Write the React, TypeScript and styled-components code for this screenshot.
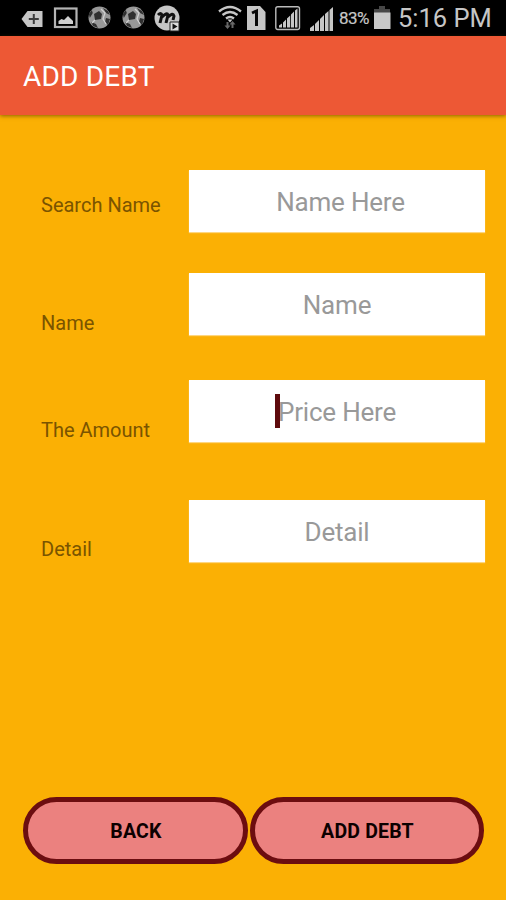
import React from "react";
import styled, { createGlobalStyle } from "styled-components";

const GlobalStyle = createGlobalStyle`
  * { box-sizing: border-box; }
  body { margin: 0; background: #fbb004; font-family: Roboto, sans-serif; }
`;

const Screen = styled.div`
  display: flex;
  flex-direction: column;
  height: 900px;
  width: 506px;
  overflow: hidden;
  background: #fbb004;
`;

const StatusBar = styled.header`
  display: flex;
  flex: none;
  height: 36px;
  background: #000;
  color: #c6c6c6;
`;

const Notifications = styled.div`
  display: flex;
  flex: none;
  width: 218px;
  padding-left: 21px;
`;

const SystemIcons = styled.div`
  display: flex;
  flex: none;
  width: 121px;
`;

const Glyph = styled.svg<{ $gap?: number }>`
  display: block;
  flex: none;
  height: 36px;
  margin-right: ${(p) => p.$gap ?? 0}px;
`;

const Percent = styled.span`
  flex: none;
  width: 35px;
  font-size: 17px;
  line-height: 37px;
  letter-spacing: -0.5px;
  -webkit-text-stroke: 0.2px #c6c6c6;
`;

const Clock = styled.time`
  flex: none;
  margin-left: 7px;
  font-size: 25.5px;
  line-height: 36px;
  white-space: nowrap;
`;

const AppBar = styled.div`
  display: flex;
  align-items: center;
  flex: none;
  position: relative;
  height: 79px;
  padding: 2px 0 0 23px;
  background: #ed5835;
  box-shadow: 0 1px 4px rgba(70, 50, 0, 0.6);
`;

const Title = styled.h1`
  margin: 0;
  color: #fff;
  font-size: 28px;
  font-weight: 400;
  line-height: 32px;
  letter-spacing: 0.2px;
`;

const Form = styled.form`
  display: flex;
  flex-direction: column;
  flex: 1;
  padding: 55px 21px 36px 23px;
`;

const Row = styled.div<{ $gap: number }>`
  display: grid;
  grid-template-columns: 148px 296px;
  flex: none;
  height: 63px;
  margin-bottom: ${(p) => p.$gap}px;
  padding-left: 18px;
`;

const Label = styled.label<{ $drop: number }>`
  padding-top: ${(p) => p.$drop}px;
  color: #7a5400;
  font-size: 20px;
  line-height: 24px;
  white-space: nowrap;
`;

const Field = styled.div`
  position: relative;
  height: 62px;
`;

const Input = styled.input<{ $indent?: number }>`
  display: block;
  width: 100%;
  height: 62px;
  padding: 2px 0 0 ${(p) => p.$indent ?? 0}px;
  border: 0;
  border-radius: 0;
  outline: 0;
  background: #fff;
  box-shadow: 0 1px 1px rgba(255, 225, 160, 0.8);
  color: #333;
  font: 400 26px Roboto, sans-serif;
  letter-spacing: -0.2px;
  text-align: center;
  &::placeholder { color: #999; opacity: 1; }
`;

const Caret = styled.span`
  position: absolute;
  top: 14px;
  left: 86px;
  width: 5px;
  height: 34px;
  background: #5e0a0d;
`;

const Actions = styled.div`
  display: grid;
  grid-template-columns: 225px 234px;
  gap: 2px;
  margin-top: auto;
`;

const PillButton = styled.button`
  height: 67px;
  padding: 1px 0 0 1px;
  border: 5px solid #6c0d10;
  border-radius: 34px;
  background: #eb817f;
  color: #0c0000;
  font: 700 19.5px Roboto, sans-serif;
  letter-spacing: 0.2px;
`;

const Ball = ({ gap }: { gap: number }) => (
  <Glyph width="23" viewBox="0 0 23 36" $gap={gap}>
    <circle cx="11.5" cy="17.5" r="11" fill="#989898" />
    <path d="M6 14l5-3 3 3-1 5-6 1zM0.8 14l3-4 1 3-3 5zM15 8l5 3 2 4-4-2zM18 18l4 1-2 6-3-3zM3 22l5 2 2 4-5-2z" fill="#303030" />
    <path d="M13 9l4 4-2 6 3 5M7 20l-3 3" stroke="#d0d0d0" strokeWidth="1.3" fill="none" />
  </Glyph>
);

const fields = [
  { id: "search", label: "Search Name", hint: "Name Here", drop: 23, gap: 40, indent: 7 },
  { id: "name", label: "Name", hint: "Name", drop: 38, gap: 44 },
  { id: "amount", label: "The Amount", hint: "Price Here", drop: 38, gap: 57, active: true },
  { id: "detail", label: "Detail", hint: "Detail", drop: 37, gap: 0 },
];

export default function App() {
  return (
    <Screen>
      <GlobalStyle />
      <StatusBar>
        <Notifications>
          <Glyph width="22" viewBox="0 0 22 36" $gap={10}>
            <path d="M0.5 19l6-8H21.5v16H6.5z" fill="#c6c6c6" />
            <path d="M12.8 14v10M7.8 19h10" stroke="#3c3c3c" strokeWidth="2" />
          </Glyph>
          <Glyph width="25" viewBox="0 0 25 36" $gap={10}>
            <rect x="2" y="8.5" width="21.5" height="18.5" fill="none" stroke="#b4b4b4" strokeWidth="2.2" />
            <path d="M5.5 24v-3l3-2 2.5 1 4-4 3 3 2 2v3z" fill="#d0d0d0" />
          </Glyph>
          <Ball gap={11} />
          <Ball gap={9} />
          <Glyph width="27" viewBox="0 0 27 36">
            <circle cx="13" cy="18" r="12.5" fill="#c6c6c6" />
            <path d="M4 15q3-3 4 0l-2 8m2-6q5-5 6-2l-2 8m2-6q5-5 6-1l-1 4" stroke="#111" strokeWidth="3" fill="none" />
            <path d="M16 22h9v9h-9z" fill="#ddd" stroke="#222" />
            <path d="M18.5 23.5l5 3-5 3z" fill="#111" />
          </Glyph>
        </Notifications>
        <SystemIcons>
          <Glyph width="24" viewBox="0 0 24 36" $gap={5}>
            <path d="M1 11.5q11-9 22 0M4.5 15q7.5-6 15 0M8 18.5q4-3 8 0" stroke="#c6c6c6" strokeWidth="2.3" fill="none" />
            <path d="M9.5 19.5h5l-2.5 3z" fill="#c6c6c6" />
            <path d="M9.5 22v5M14.5 23v5" stroke="#686868" strokeWidth="2" />
            <path d="M6.5 25.5h6l-3 3.5zM11.5 24.5h6l-3-3.5z" fill="#686868" />
          </Glyph>
          <Glyph width="19" viewBox="0 0 19 36" $gap={9}>
            <path d="M0 6h13l5.5 6v18H0z" fill="#c6c6c6" />
            <path d="M5 13l4.5-2v15" stroke="#080808" strokeWidth="3" fill="none" />
          </Glyph>
          <Glyph width="26" viewBox="0 0 26 36" $gap={8}>
            <rect x="0.8" y="6.8" width="23.7" height="22.7" rx="2" fill="none" stroke="#bbb" strokeWidth="1.4" />
            <path d="M4 27.5v-2l3-2v4zM8 27.5v-5l3-3v8zM12 27.5v-9l3.2-3v12zM16 27.5v-13l3-3v16zM20 27.5v-17l2.5-2v19z" fill="#c6c6c6" />
          </Glyph>
          <Glyph width="25" viewBox="0 0 25 36">
            <path d="M1 31v-3l4-3v6zM6 31v-7l4-4v11zM11 31v-12l4-4v16zM16 31v-17l3.5-3v20zM20.5 31v-21l3.5-3v24z" fill="#c6c6c6" />
          </Glyph>
        </SystemIcons>
        <Percent>83%</Percent>
        <Glyph width="17" viewBox="0 0 17 36">
          <path d="M5 6h6v3h5v4H0V9h5z" fill="#474747" />
          <path d="M0 12.5h16.5V29H0z" fill="#c8c8c8" />
        </Glyph>
        <Clock>5:16 PM</Clock>
      </StatusBar>
      <AppBar>
        <Title>ADD DEBT</Title>
      </AppBar>
      <Form>
        {fields.map((f) => (
          <Row key={f.id} $gap={f.gap}>
            <Label htmlFor={f.id} $drop={f.drop}>{f.label}</Label>
            <Field>
              <Input id={f.id} placeholder={f.hint} $indent={f.indent} />
              {f.active && <Caret />}
            </Field>
          </Row>
        ))}
        <Actions>
          <PillButton type="button">BACK</PillButton>
          <PillButton type="button">ADD DEBT</PillButton>
        </Actions>
      </Form>
    </Screen>
  );
}
